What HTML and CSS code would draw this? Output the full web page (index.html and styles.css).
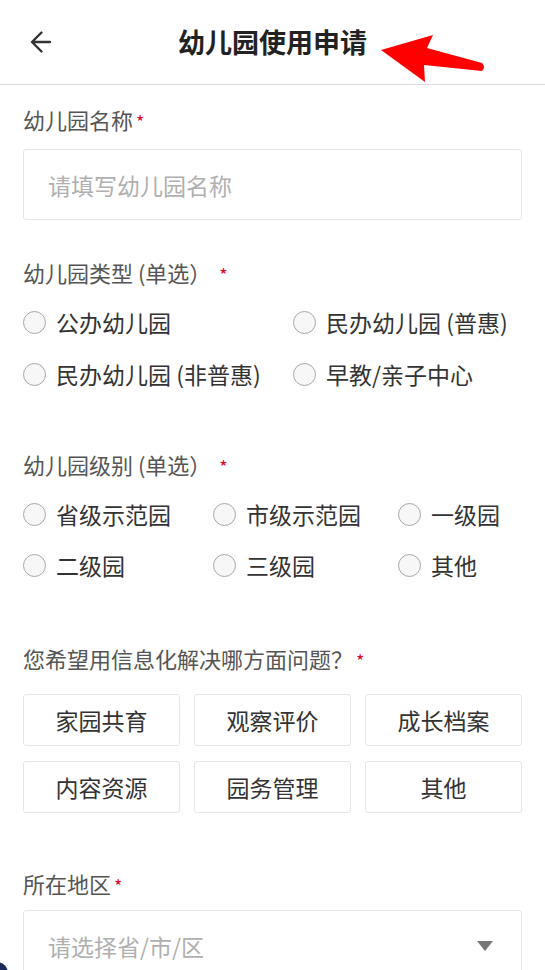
FILE: index.html
```html
<!DOCTYPE html>
<html lang="zh-CN">
<head>
    <meta charset="UTF-8">
    <meta name="viewport" content="width=device-width, initial-scale=1.0">
    <title>幼儿园使用申请</title>
    <link rel="stylesheet" href="styles.css">
</head>
<body>
    <div class="header">
        <a class="back">
            <svg width="26" height="26" viewBox="0 0 26 26"><path d="M21 13H3.5M12.5 3.5L3 13l9.5 9.5" fill="none" stroke="#333" stroke-width="2.4" stroke-linecap="round" stroke-linejoin="round"/></svg>
        </a>
        <h1>幼儿园使用申请</h1>
        <svg class="pointer" width="110" height="52" viewBox="0 0 110 52"><path d="M1 16 L53 1 L47 14 L102 29 Q106 33 102 37 L44 31 L45 48 Z" fill="#ff0000"/></svg>
    </div>

    <div class="form">
        <div class="field">
            <div class="label">幼儿园名称<span class="req">*</span></div>
            <div class="input placeholder">请填写幼儿园名称</div>
        </div>

        <div class="field">
            <div class="label">幼儿园类型 (单选） <span class="req">*</span></div>
            <div class="radios two">
                <label class="radio"><span class="dot"></span>公办幼儿园</label>
                <label class="radio"><span class="dot"></span>民办幼儿园 (普惠)</label>
                <label class="radio"><span class="dot"></span>民办幼儿园 (非普惠)</label>
                <label class="radio"><span class="dot"></span>早教/亲子中心</label>
            </div>
        </div>

        <div class="field">
            <div class="label">幼儿园级别 (单选） <span class="req">*</span></div>
            <div class="radios three">
                <label class="radio"><span class="dot"></span>省级示范园</label>
                <label class="radio"><span class="dot"></span>市级示范园</label>
                <label class="radio"><span class="dot"></span>一级园</label>
                <label class="radio"><span class="dot"></span>二级园</label>
                <label class="radio"><span class="dot"></span>三级园</label>
                <label class="radio"><span class="dot"></span>其他</label>
            </div>
        </div>

        <div class="field">
            <div class="label">您希望用信息化解决哪方面问题？<span class="req">*</span></div>
            <div class="options">
                <div class="option">家园共育</div>
                <div class="option">观察评价</div>
                <div class="option">成长档案</div>
                <div class="option">内容资源</div>
                <div class="option">园务管理</div>
                <div class="option">其他</div>
            </div>
        </div>

        <div class="field region">
            <div class="label">所在地区<span class="req">*</span></div>
            <div class="input select placeholder">请选择省/市/区<span class="caret"></span></div>
        </div>
    </div>

    <div class="fab"></div>
</body>
</html>
```

FILE: styles.css
```css
* { margin: 0; padding: 0; box-sizing: border-box; }
body { background-color: #fff; color: #333; font-family: 'Noto Sans CJK SC', 'Noto Sans', sans-serif; width: 545px; height: 970px; overflow: hidden; position: relative; }
.header { position: relative; height: 85px; border-bottom: 1px solid #dcdcdc; display: flex; align-items: center; justify-content: center; }
.back { position: absolute; left: 29px; top: 29px; width: 26px; height: 26px; }
.header h1 { font-size: 27px; font-weight: 700; color: #222; line-height: 1; margin-top: -2px; }
.pointer { position: absolute; left: 380px; top: 34px; }
.form { padding: 0 23px; }
.field { padding-top: 19px; padding-bottom: 18px; }
.label { font-size: 22px; line-height: 30px; color: #555; }
.req { color: #e4002b; font-size: 18px; margin-left: 3px; }
.input { margin-top: 13px; height: 71px; border: 1px solid #e6e6e6; border-radius: 3px; padding: 0 24px; display: flex; align-items: center; font-size: 23px; }
.region .input { margin-top: 10px; }
.placeholder { color: #b0b0b0; }
.select { justify-content: space-between; }
.caret { width: 0; height: 0; border-left: 8px solid transparent; border-right: 8px solid transparent; border-top: 10px solid #777; margin-right: 4px; }
.radios { display: grid; margin-top: 18px; row-gap: 21px; margin-bottom: 23px; }
.radios.two { grid-template-columns: 270px 1fr; row-gap: 22px; }
.radios.three { grid-template-columns: 190px 185px 1fr; margin-bottom: 26px; }
.radio { display: flex; align-items: center; height: 30px; font-size: 23px; color: #333; white-space: nowrap; }
.dot { width: 23px; height: 23px; border: 1px solid #a8a8a8; border-radius: 50%; background-color: #f7f7f7; margin-right: 10px; flex-shrink: 0; }
.options { display: grid; grid-template-columns: repeat(3, 1fr); column-gap: 14px; row-gap: 15px; margin-top: 19px; margin-bottom: 18px; }
.option { height: 52px; border: 1px solid #e6e6e6; border-radius: 3px; display: flex; align-items: center; justify-content: center; font-size: 23px; color: #333; }
.fab { position: absolute; left: -14px; bottom: -14px; width: 22px; height: 22px; border-radius: 50%; background-color: #1c2a5a; }
```
